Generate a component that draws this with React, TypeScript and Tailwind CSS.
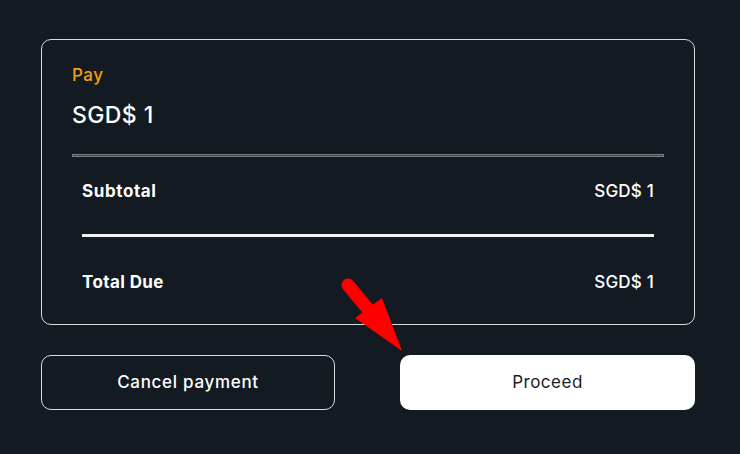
export default function App() {
  return (
    <div
      className="relative w-[740px] h-[454px] bg-[#131a22] overflow-hidden"
      style={{ fontFamily: "Inter, 'Noto Sans', sans-serif" }}
    >
      <div className="pt-[39px] pl-[41px] w-[695px]">
        <div className="border border-[#d9dadc] rounded-[10px] pt-[23px] px-[30px] pb-[30px]">
          <div className="text-[#f5a00d] text-[17px] leading-6 font-medium tracking-[0.5px]">Pay</div>
          <div className="mt-[12px] text-white text-[23px] leading-8 font-medium tracking-[0.4px]">SGD$ 1</div>
          <div className="mt-[23px] h-[3px] border border-[#7b7e82] bg-[#3b4047]" />
          <div className="px-[10px]">
            <div className="mt-[22px] flex justify-between text-white text-[17px] leading-6">
              <span className="font-bold tracking-[0.6px]">Subtotal</span>
              <span className="font-medium tracking-[0.2px]">SGD$ 1</span>
            </div>
            <div className="mt-[31px] h-[3px] bg-[#f2f2f2]" />
            <div className="mt-[33px] flex justify-between text-white text-[17px] leading-6">
              <span className="font-bold tracking-[0.4px]">Total Due</span>
              <span className="font-medium tracking-[0.2px]">SGD$ 1</span>
            </div>
          </div>
        </div>
        <div className="mt-[30px] flex justify-between">
          <button className="w-[294px] h-[55px] border border-[#d9dadc] rounded-[10px] text-white text-[17px] font-medium tracking-[0.7px]">
            Cancel payment
          </button>
          <button className="w-[295px] h-[55px] bg-white rounded-[10px] text-[#1a1d22] text-[17px] tracking-[0.5px]">
            Proceed
          </button>
        </div>
      </div>
      <svg
        className="absolute left-0 top-0 pointer-events-none"
        width="740"
        height="454"
        viewBox="0 0 740 454"
      >
        <line x1="348" y1="285" x2="372" y2="314" stroke="#ff0000" strokeWidth="13" strokeLinecap="round" />
        <polygon points="355,318 382,298 402,351" fill="#ff0000" />
      </svg>
    </div>
  );
}
